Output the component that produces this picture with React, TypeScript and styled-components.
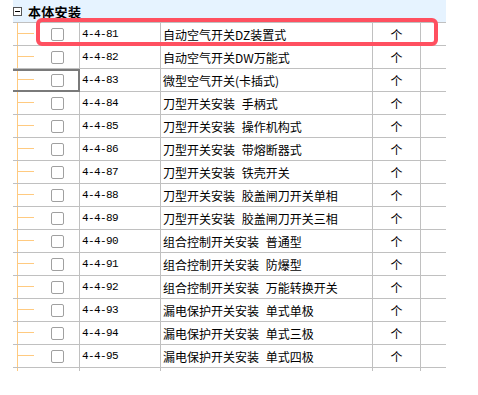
import React from 'react'
import styled, { createGlobalStyle } from 'styled-components'

const rows = [
  { code: '4-4-81', name: '自动空气开关DZ装置式' },
  { code: '4-4-82', name: '自动空气开关DW万能式' },
  { code: '4-4-83', name: '微型空气开关(卡插式)' },
  { code: '4-4-84', name: '刀型开关安装 手柄式' },
  { code: '4-4-85', name: '刀型开关安装 操作机构式' },
  { code: '4-4-86', name: '刀型开关安装 带熔断器式' },
  { code: '4-4-87', name: '刀型开关安装 铁壳开关' },
  { code: '4-4-88', name: '刀型开关安装 胶盖闸刀开关单相' },
  { code: '4-4-89', name: '刀型开关安装 胶盖闸刀开关三相' },
  { code: '4-4-90', name: '组合控制开关安装 普通型' },
  { code: '4-4-91', name: '组合控制开关安装 防爆型' },
  { code: '4-4-92', name: '组合控制开关安装 万能转换开关' },
  { code: '4-4-93', name: '漏电保护开关安装 单式单极' },
  { code: '4-4-94', name: '漏电保护开关安装 单式三极' },
  { code: '4-4-95', name: '漏电保护开关安装 单式四极' },
]

const SELECTED = '4-4-83'

export default function App() {
  return (
    <>
      <GlobalStyle />
      <Page>
        <Tree>
          <GroupHeader>
            <Toggle />
            <GroupTitle>本体安装</GroupTitle>
          </GroupHeader>
          {rows.map(row => (
            <Row key={row.code}>
              <TreeCell data-selected={row.code === SELECTED ? 'yes' : 'no'}>
                <Check />
              </TreeCell>
              <CodeCell>{row.code}</CodeCell>
              <NameCell>{row.name}</NameCell>
              <UnitCell>个</UnitCell>
              <Cell />
            </Row>
          ))}
          <Tail>
            <TreeCell />
            <CodeCell />
            <NameCell />
            <UnitCell />
            <Cell />
          </Tail>
          <Highlight />
        </Tree>
      </Page>
    </>
  )
}

const GlobalStyle = createGlobalStyle`
  html, body {
    margin: 0;
    background: #fff;
  }
  body {
    font-family: "Noto Sans CJK SC", sans-serif;
    font-size: 12px;
    color: #000;
  }
`

const Page = styled.div`
  width: 478px;
  height: 395px;
  padding-left: 13px;
  box-sizing: border-box;
`

const Tree = styled.div`
  position: relative;
  width: 433px;
`

const GroupHeader = styled.div`
  display: flex;
  align-items: center;
  height: 22px;
  background: #e6f3ff;
  border-bottom: 1px solid #c0c0c0;
`

const Toggle = styled.span`
  position: relative;
  width: 9px;
  height: 9px;
  border: 1px solid #555;
  box-sizing: border-box;
  margin-right: 6px;
  background: #fff;

  &::after {
    content: '';
    position: absolute;
    left: 1px;
    right: 1px;
    top: 3px;
    height: 1px;
    background: #000;
  }
`

const GroupTitle = styled.span`
  font-size: 13px;
  font-weight: bold;
  letter-spacing: 0.3px;
`

const Row = styled.div`
  display: grid;
  grid-template-columns: 66px 81px 212px 48px 26px;
  height: 23px;
  border-bottom: 1px solid #c0c0c0;
  box-sizing: border-box;
`

const Tail = styled(Row)`
  height: 3px;
  border-bottom: none;
`

const Cell = styled.div`
  display: flex;
  align-items: center;
  border-left: 1px solid #c0c0c0;
  white-space: pre;
  overflow: hidden;
`

const TreeCell = styled.div`
  position: relative;
  display: flex;
  align-items: center;
  padding-left: 38px;
  background:
    linear-gradient(#ffca80, #ffca80) 4px 0 / 1px 100% no-repeat,
    linear-gradient(#ffca80, #ffca80) 4px 10px / 17px 1px no-repeat;

  &[data-selected='yes']::after {
    content: '';
    position: absolute;
    left: 0;
    right: -1px;
    top: 0;
    bottom: -1px;
    border-top: 2px solid #7a7a7a;
    border-right: 2px solid #7a7a7a;
    border-bottom: 2px solid #7a7a7a;
    z-index: 2;
  }
`

const Check = styled.span`
  width: 13px;
  height: 13px;
  box-sizing: border-box;
  border: 1px solid #a0a0a0;
  border-radius: 2px;
  background: #fff;
`

const CodeCell = styled(Cell)`
  padding-left: 2px;
  font-family: "Liberation Mono", monospace;
  font-size: 11px;
  letter-spacing: -0.6px;
`

const NameCell = styled(Cell)`
  padding-left: 2px;
  word-spacing: 4px;
`

const UnitCell = styled(Cell)`
  justify-content: center;
`

const Highlight = styled.div`
  position: absolute;
  left: 23px;
  top: 18px;
  width: 402px;
  height: 28px;
  box-sizing: border-box;
  border: 4px solid #ff5060;
  border-radius: 6px;
  pointer-events: none;
`
